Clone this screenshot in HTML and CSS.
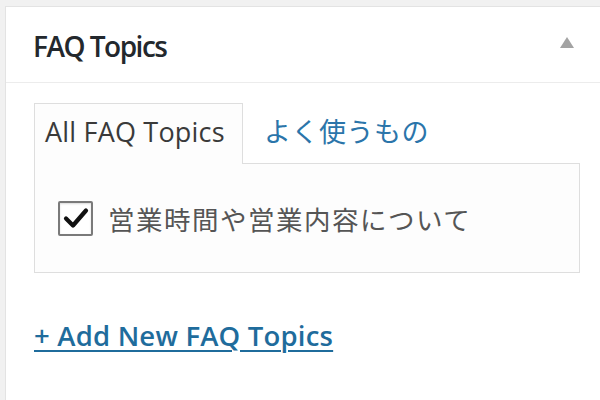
FILE: index.html
```html
<!DOCTYPE html>
<html lang="ja">
<head>
<meta charset="utf-8">
<title>FAQ Topics</title>
<link rel="stylesheet" href="styles.css">
</head>
<body>
<div class="card">
  <div class="header">
    <h2 class="title">FAQ Topics</h2>
    <span class="toggle" aria-hidden="true"></span>
  </div>
  <div class="inside">
    <div class="tabs">
      <span class="tab active">All FAQ Topics</span>
      <a class="tab link" href="#">よく使うもの</a>
    </div>
    <div class="panel">
      <label class="row">
        <span class="check">
          <svg width="26" height="22" viewBox="0 0 26 22"><path d="M3 11.5 L10 18.5 L23 3.5" fill="none" stroke="#111" stroke-width="4.2" stroke-linecap="round" stroke-linejoin="round"/></svg>
        </span>
        <span class="label">営業時間や営業内容について</span>
      </label>
    </div>
    <a class="add" href="#">+ Add New FAQ Topics</a>
  </div>
</div>
</body>
</html>
```
FILE: styles.css
```css
html, body {
  margin: 0;
  padding: 0;
  background: #f1f1f1;
  height: 100%;
  overflow: hidden;
}
body {
  font-family: "Open Sans", "Noto Sans CJK JP", sans-serif;
}
.card {
  margin: 6px 0 0 5px;
  background: #fff;
  border: 1px solid #e3e3e3;
  border-right: none;
  border-bottom: none;
  height: 400px;
}
.header {
  height: 75px;
  box-sizing: border-box;
  border-bottom: 1px solid #ececec;
  height: 76px;
  display: flex;
  align-items: center;
  justify-content: space-between;
  padding: 2px 26px 0 27px;
}
.title {
  margin: 0;
  font-size: 28px;
  font-weight: 600;
  color: #23282d;
  letter-spacing: -1.5px;
}
.toggle {
  width: 0;
  height: 0;
  border-left: 7px solid transparent;
  border-right: 7px solid transparent;
  border-bottom: 11px solid #a3a3a3;
  margin-bottom: 6px;
}
.inside {
  padding: 20px 20px 0 28px;
}
.tabs {
  display: flex;
  align-items: flex-end;
}
.tab {
  font-size: 27px;
  height: 60px;
  box-sizing: border-box;
  display: flex;
  align-items: center;
  letter-spacing: 0.2px;
}
.tab.active {
  color: #3a3a3a;
  background: #fdfdfd;
  border: 1px solid #dedede;
  border-bottom: none;
  padding: 0 0 6px 10px;
  width: 209px;
  position: relative;
  z-index: 1;
  margin-bottom: -1px;
  height: 61px;
}
.tab.link {
  color: #2b75aa;
  text-decoration: none;
  margin-left: 21px;
  font-family: "Noto Sans CJK JP", sans-serif;
  font-size: 27px;
  letter-spacing: 0.5px;
  padding-bottom: 6px;
}
.panel {
  border: 1px solid #dedede;
  background: #fdfdfd;
  height: 110px;
  box-sizing: border-box;
  display: flex;
  align-items: center;
  padding: 0 23px;
  margin-bottom: 44px;
}
.row {
  display: flex;
  align-items: center;
  gap: 15px;
}
.check {
  width: 31px;
  height: 31px;
  border: 2px solid #7a7a7a;
  border-radius: 2px;
  background: #fff;
  display: flex;
  align-items: center;
  justify-content: center;
  box-shadow: inset 0 1px 2px rgba(0,0,0,0.15);
}
.label {
  font-family: "Noto Sans CJK JP", sans-serif;
  font-size: 26.5px;
  color: #555;
  letter-spacing: 1.5px;
}
.add {
  font-size: 27.5px;
  font-weight: 600;
  color: #1f6c9c;
  text-decoration: underline;
  text-decoration-thickness: 2px;
  text-underline-offset: 4px;
  letter-spacing: 0.2px;
}
```
